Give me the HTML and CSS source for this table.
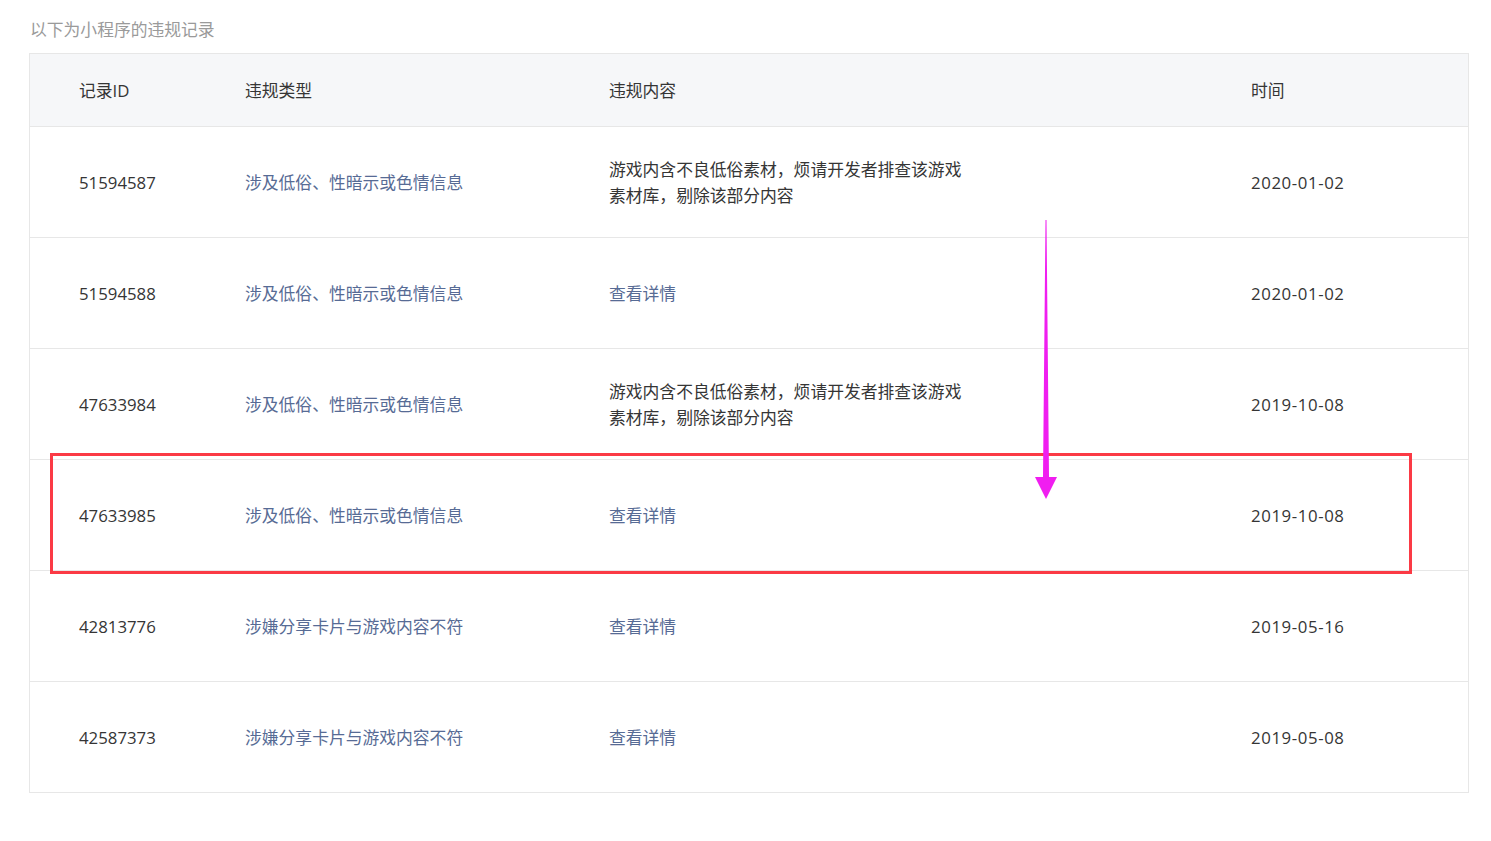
FILE: index.html
```html
<!DOCTYPE html>
<html lang="zh-CN">
<head>
<meta charset="utf-8">
<title>违规记录</title>
<link rel="stylesheet" href="styles.css">
</head>
<body>
<div class="page">
  <p class="intro">以下为小程序的违规记录</p>
  <div class="table">
    <div class="row head">
      <div class="cell">记录ID</div>
      <div class="cell">违规类型</div>
      <div class="cell">违规内容</div>
      <div class="cell">时间</div>
    </div>
    <div class="row">
      <div class="cell">51594587</div>
      <div class="cell"><a class="link">涉及低俗、性暗示或色情信息</a></div>
      <div class="cell"><span class="desc">游戏内含不良低俗素材，烦请开发者排查该游戏素材库，剔除该部分内容</span></div>
      <div class="cell date">2020-01-02</div>
    </div>
    <div class="row">
      <div class="cell">51594588</div>
      <div class="cell"><a class="link">涉及低俗、性暗示或色情信息</a></div>
      <div class="cell"><a class="link">查看详情</a></div>
      <div class="cell date">2020-01-02</div>
    </div>
    <div class="row">
      <div class="cell">47633984</div>
      <div class="cell"><a class="link">涉及低俗、性暗示或色情信息</a></div>
      <div class="cell"><span class="desc">游戏内含不良低俗素材，烦请开发者排查该游戏素材库，剔除该部分内容</span></div>
      <div class="cell date">2019-10-08</div>
    </div>
    <div class="row">
      <div class="cell">47633985</div>
      <div class="cell"><a class="link">涉及低俗、性暗示或色情信息</a></div>
      <div class="cell"><a class="link">查看详情</a></div>
      <div class="cell date">2019-10-08</div>
    </div>
    <div class="row">
      <div class="cell">42813776</div>
      <div class="cell"><a class="link">涉嫌分享卡片与游戏内容不符</a></div>
      <div class="cell"><a class="link">查看详情</a></div>
      <div class="cell date">2019-05-16</div>
    </div>
    <div class="row">
      <div class="cell">42587373</div>
      <div class="cell"><a class="link">涉嫌分享卡片与游戏内容不符</a></div>
      <div class="cell"><a class="link">查看详情</a></div>
      <div class="cell date">2019-05-08</div>
    </div>
  </div>
  <div class="highlight"></div>
  <svg class="arrow" width="30" height="290" viewBox="0 0 30 290" aria-hidden="true">
    <polygon points="14.5,0 15.5,0 18,257 26,257 15,279 4,257 12,257" fill="#f01ef0"/>
  </svg>
</div>
</body>
</html>
```
FILE: styles.css
```css
html, body {
  margin: 0;
  padding: 0;
  background: #ffffff;
}
body {
  font-family: "Open Sans", "Noto Sans CJK SC", sans-serif;
  font-size: 16.8px;
  color: #353535;
}
.page {
  position: relative;
  padding: 18px 0 0 29px;
  width: 1440px;
}
.intro {
  margin: 0 0 0 1px;
  height: 35px;
  line-height: 24px;
  color: #9a9a9a;
}
.table {
  border: 1px solid #e7e7e7;
  width: 1438px;
}
.row {
  display: grid;
  grid-template-columns: 166px 364px 642px 1fr;
  align-items: center;
  height: 110px;
  border-top: 1px solid #e7e7e7;
}
.row.head {
  height: 72px;
  border-top: none;
  background: #f6f7f9;
}
.cell {
  padding-left: 49px;
  padding-top: 2px;
  line-height: 26px;
}
.date {
  letter-spacing: 0.6px;
}
.link {
  color: #576b95;
  text-decoration: none;
}
.desc {
  display: block;
  max-width: 358px;
}
.highlight {
  position: absolute;
  left: 50px;
  top: 453px;
  width: 1356px;
  height: 115px;
  border: 3px solid #fb3a45;
}
.arrow {
  position: absolute;
  left: 1031px;
  top: 220px;
}
```
